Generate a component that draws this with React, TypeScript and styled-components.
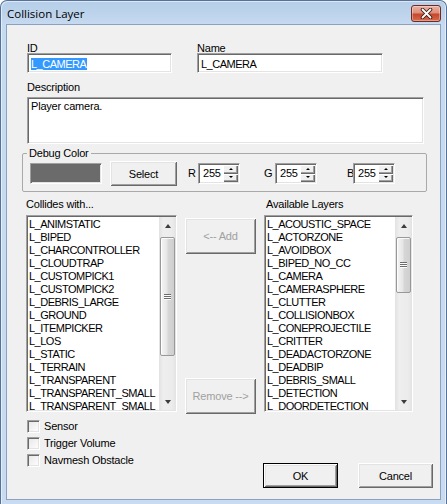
import React from "react";
import styled, { createGlobalStyle, css } from "styled-components";

const UI_FONT = `"Liberation Sans", Arial, sans-serif`;

const GlobalStyle = createGlobalStyle`
  *, *::before, *::after { box-sizing: border-box; }
  html, body { margin: 0; padding: 0; background: #ffffff; }
  body { font-family: ${UI_FONT}; font-size: 11px; letter-spacing: -0.2px; color: #000; }
`;

const sunken = css`
  border: 1px solid;
  border-color: #a0a0a0 #ffffff #ffffff #a0a0a0;
  box-shadow: inset 1px 1px 0 #696969, inset -1px -1px 0 #e3e3e3;
`;

const raised = css`
  box-shadow: inset 1px 1px 0 #ffffff, inset -1px -1px 0 #696969,
    inset 2px 2px 0 #e3e3e3, inset -2px -2px 0 #a0a0a0;
`;

const Window = styled.div`
  width: 447px;
  height: 504px;
  display: flex;
  flex-direction: column;
  border: 1px solid #55739a;
  border-bottom: none;
  border-radius: 7px 7px 0 0;
  padding: 0 5px 4px;
  background: linear-gradient(to bottom, #b6cee8 0px, #bdd3ec 12px, #c6daf0 24px, #c8dbf0 100%);
  box-shadow: inset 1px 1px 0 rgba(255, 255, 255, 0.55), inset -1px 0 0 rgba(255, 255, 255, 0.55);
`;

const TitleBar = styled.div`
  height: 23px;
  display: flex;
  justify-content: space-between;
  align-items: flex-start;
`;

const Title = styled.div`
  font-family: "Open Sans", "Noto Sans", sans-serif;
  font-size: 11.5px;
  letter-spacing: 0;
  line-height: 25px;
  padding-left: 1px;
  color: #000;
`;

const CloseButton = styled.div`
  width: 30px;
  height: 17px;
  margin-top: 4px;
  border: 1px solid #6e2a1c;
  border-radius: 3px;
  background: linear-gradient(to bottom, #eab1a3 0%, #de8f7b 45%, #c8472b 55%, #d66a4f 100%);
  box-shadow: inset 0 0 0 1px rgba(255, 255, 255, 0.35);
  display: flex;
  align-items: center;
  justify-content: center;
`;

const Client = styled.div`
  flex: 1;
  display: flex;
  flex-direction: column;
  background: #f0f0f0;
  border: 1px solid #8aa2bf;
`;

const TopRow = styled.div`
  display: flex;
  gap: 25px;
  margin: 18px 0 0 20px;
`;

const Field = styled.div<{ $w: number }>`
  width: ${(p) => p.$w}px;
  display: flex;
  flex-direction: column;
`;

const Label = styled.div<{ $ml?: number; $mt?: number }>`
  height: 10px;
  line-height: 10px;
  white-space: nowrap;
  margin-left: ${(p) => p.$ml ?? 0}px;
  margin-top: ${(p) => p.$mt ?? 0}px;
`;

const Edit = styled.div`
  height: 20px;
  background: #fff;
  ${sunken};
  padding: 4px 0 0 3px;
  line-height: 13px;
  letter-spacing: -0.5px;
  white-space: nowrap;
  overflow: hidden;
`;

const Selected = styled.span`
  background: #3399ff;
  color: #fff;
  padding-right: 1px;
`;

const TextArea = styled.div`
  width: 397px;
  height: 47px;
  margin: 5px 0 0 20px;
  background: #fff;
  ${sunken};
  padding: 2px 0 0 3px;
  line-height: 13px;
`;

const Group = styled.fieldset`
  margin: 3px 0 0 15px;
  width: 405px;
  min-inline-size: 0;
  padding: 1px 0 5px 7px;
  border: 1px solid #a9a9a9;
  border-radius: 2px;
`;

const Legend = styled.legend`
  padding: 0 2px;
  margin-left: -3px;
  line-height: 13px;
  font-size: 11px;
`;

const GroupRow = styled.div`
  height: 25px;
  display: flex;
  align-items: center;
`;

const Swatch = styled.div`
  width: 72px;
  height: 21px;
  background: #6b6b6b;
  ${sunken};
`;

const Button = styled.button<{ $w: number; $h: number; $ml?: number; $default?: boolean }>`
  width: ${(p) => p.$w}px;
  height: ${(p) => p.$h}px;
  margin: 0 0 0 ${(p) => p.$ml ?? 0}px;
  padding: 0;
  font-family: ${UI_FONT};
  font-size: 11px;
  letter-spacing: -0.2px;
  color: #000;
  background: #f0f0f0;
  border: ${(p) => (p.$default ? "1px solid #000" : "none")};
  border-radius: 0;
  ${raised};
  &:disabled {
    color: #a0a0a0;
  }
`;

const SpinLabel = styled.div<{ $ml: number; $w: number }>`
  margin-left: ${(p) => p.$ml}px;
  width: ${(p) => p.$w}px;
  line-height: 13px;
  white-space: nowrap;
`;

const SpinEdit = styled.div`
  width: 42px;
  height: 21px;
  background: #fff;
  ${sunken};
  display: flex;
  align-items: stretch;
  padding: 1px 1px 1px 0;
`;

const SpinText = styled.div`
  flex: 1;
  padding: 2px 0 0 4px;
  line-height: 13px;
`;

const SpinButtons = styled.div`
  width: 15px;
  display: flex;
  flex-direction: column;
`;

const SpinBtn = styled.div<{ $down?: boolean }>`
  flex: 1;
  background: #f0f0f0;
  box-shadow: inset 1px 1px 0 #ffffff, inset -1px -1px 0 #696969, inset -2px -2px 0 #a0a0a0;
  display: flex;
  align-items: center;
  justify-content: center;
  &::after {
    content: "";
    width: 0;
    height: 0;
    margin-top: -1px;
    border-left: 2px solid transparent;
    border-right: 2px solid transparent;
    ${(p) => (p.$down ? "border-top: 2px solid #000;" : "border-bottom: 2px solid #000;")}
  }
`;

const Lists = styled.div`
  display: grid;
  grid-template-columns: 151px 71px 149px;
  grid-template-rows: 10px 197px;
  column-gap: 8px;
  row-gap: 6px;
  margin: 7px 0 0 19px;
`;

const ListBox = styled.div`
  background: #fff;
  ${sunken};
  display: flex;
  overflow: hidden;
`;

const Items = styled.div`
  flex: 1;
  min-width: 0;
  padding: 2px 0 0 2px;
  overflow: hidden;
`;

const Item = styled.div`
  height: 13px;
  line-height: 13px;
  letter-spacing: -0.5px;
  white-space: nowrap;
`;

const ScrollBar = styled.div`
  width: 17px;
  flex-shrink: 0;
  margin: 1px 0;
  display: flex;
  flex-direction: column;
  background: linear-gradient(to right, #e2e2e2 0%, #eeeeee 25%, #ececec 75%, #e3e3e3 100%);
`;

const Arrow = styled.div<{ $down?: boolean }>`
  height: 17px;
  display: flex;
  align-items: center;
  justify-content: center;
  &::after {
    content: "";
    width: 0;
    height: 0;
    border-left: 3.5px solid transparent;
    border-right: 3.5px solid transparent;
    ${(p) => (p.$down ? "border-top: 4px solid #3c3c3c;" : "border-bottom: 4px solid #3c3c3c;")}
  }
`;

const Track = styled.div`
  flex: 1;
  display: flex;
  flex-direction: column;
  align-items: stretch;
`;

const Thumb = styled.div<{ $h: number }>`
  height: ${(p) => p.$h}px;
  margin: 3px 1px 0 1px;
  border: 1px solid #989898;
  border-radius: 2px;
  background: linear-gradient(to right, #f4f4f4 0%, #e6e6e6 45%, #d6d6d6 55%, #cfcfcf 100%);
  box-shadow: inset 1px 1px 0 rgba(255, 255, 255, 0.8);
  display: flex;
  align-items: center;
  justify-content: center;
`;

const Grip = styled.div`
  width: 7px;
  height: 6px;
  background: repeating-linear-gradient(to bottom, #6c6c6c 0 1px, #fbfbfb 1px 2px);
`;

const Middle = styled.div`
  display: flex;
  flex-direction: column;
  padding-top: 3px;
`;

const Bottom = styled.div`
  display: flex;
  margin-top: 6px;
`;

const CheckList = styled.div`
  margin-left: 20px;
  display: flex;
  flex-direction: column;
`;

const CheckRow = styled.div`
  height: 17px;
  display: flex;
  align-items: center;
`;

const CheckBox = styled.div`
  width: 13px;
  height: 13px;
  background: linear-gradient(135deg, #e6e6e6, #ffffff);
  ${sunken};
`;

const CheckText = styled.div`
  margin-left: 4px;
  line-height: 13px;
  white-space: nowrap;
`;

const DialogButtons = styled.div`
  display: flex;
  gap: 20px;
  margin: 45px 7px 0 auto;
`;

const collides = [
  "L_ANIMSTATIC",
  "L_BIPED",
  "L_CHARCONTROLLER",
  "L_CLOUDTRAP",
  "L_CUSTOMPICK1",
  "L_CUSTOMPICK2",
  "L_DEBRIS_LARGE",
  "L_GROUND",
  "L_ITEMPICKER",
  "L_LOS",
  "L_STATIC",
  "L_TERRAIN",
  "L_TRANSPARENT",
  "L_TRANSPARENT_SMALL",
  "L_TRANSPARENT_SMALL_AND_STATIC",
];

const available = [
  "L_ACOUSTIC_SPACE",
  "L_ACTORZONE",
  "L_AVOIDBOX",
  "L_BIPED_NO_CC",
  "L_CAMERA",
  "L_CAMERASPHERE",
  "L_CLUTTER",
  "L_COLLISIONBOX",
  "L_CONEPROJECTILE",
  "L_CRITTER",
  "L_DEADACTORZONE",
  "L_DEADBIP",
  "L_DEBRIS_SMALL",
  "L_DETECTION",
  "L_DOORDETECTION",
];

function Spinner({ label, ml, lw }: { label: string; ml: number; lw: number }) {
  return (
    <>
      <SpinLabel $ml={ml} $w={lw}>
        {label}
      </SpinLabel>
      <SpinEdit>
        <SpinText>255</SpinText>
        <SpinButtons>
          <SpinBtn />
          <SpinBtn $down />
        </SpinButtons>
      </SpinEdit>
    </>
  );
}

function List({ items, thumb }: { items: string[]; thumb: number }) {
  return (
    <ListBox>
      <Items>
        {items.map((i) => (
          <Item key={i}>{i}</Item>
        ))}
      </Items>
      <ScrollBar>
        <Arrow />
        <Track>
          <Thumb $h={thumb}>
            <Grip />
          </Thumb>
        </Track>
        <Arrow $down />
      </ScrollBar>
    </ListBox>
  );
}

export default function App() {
  return (
    <>
      <GlobalStyle />
      <Window>
        <TitleBar>
          <Title>Collision Layer</Title>
          <CloseButton>
            <svg width="13" height="11" viewBox="0 0 13 11">
              <path d="M2.5 1.5 L10.5 9.5 M10.5 1.5 L2.5 9.5" stroke="#3a1a12" strokeWidth="3.6" strokeLinecap="round" />
              <path d="M2.5 1.5 L10.5 9.5 M10.5 1.5 L2.5 9.5" stroke="#ffffff" strokeWidth="1.8" strokeLinecap="round" />
            </svg>
          </CloseButton>
        </TitleBar>
        <Client>
          <TopRow>
            <Field $w={145}>
              <Label>ID</Label>
              <Edit>
                <Selected>L_CAMERA</Selected>
              </Edit>
            </Field>
            <Field $w={186}>
              <Label>Name</Label>
              <Edit>L_CAMERA</Edit>
            </Field>
          </TopRow>
          <Label $ml={20} $mt={9}>
            Description
          </Label>
          <TextArea>Player camera.</TextArea>
          <Group>
            <Legend>Debug Color</Legend>
            <GroupRow>
              <Swatch />
              <Button $w={67} $h={25} $ml={8}>
                Select
              </Button>
              <Spinner label="R" ml={11} lw={10} />
              <Spinner label="G" ml={24} lw={11} />
              <Spinner label="B" ml={30} lw={6} />
            </GroupRow>
          </Group>
          <Lists>
            <Label>Collides with...</Label>
            <span />
            <Label $ml={2}>Available Layers</Label>
            <List items={collides} thumb={119} />
            <Middle>
              <Button $w={71} $h={36} disabled>
                &lt;-- Add
              </Button>
              <Button $w={71} $h={36} disabled style={{ marginTop: "auto", marginBottom: "-2px" }}>
                Remove --&gt;
              </Button>
            </Middle>
            <List items={available} thumb={56} />
          </Lists>
          <Bottom>
            <CheckList>
              {["Sensor", "Trigger Volume", "Navmesh Obstacle"].map((t) => (
                <CheckRow key={t}>
                  <CheckBox />
                  <CheckText>{t}</CheckText>
                </CheckRow>
              ))}
            </CheckList>
            <DialogButtons>
              <Button $w={75} $h={25} $default>
                OK
              </Button>
              <Button $w={75} $h={25}>
                Cancel
              </Button>
            </DialogButtons>
          </Bottom>
        </Client>
      </Window>
    </>
  );
}
